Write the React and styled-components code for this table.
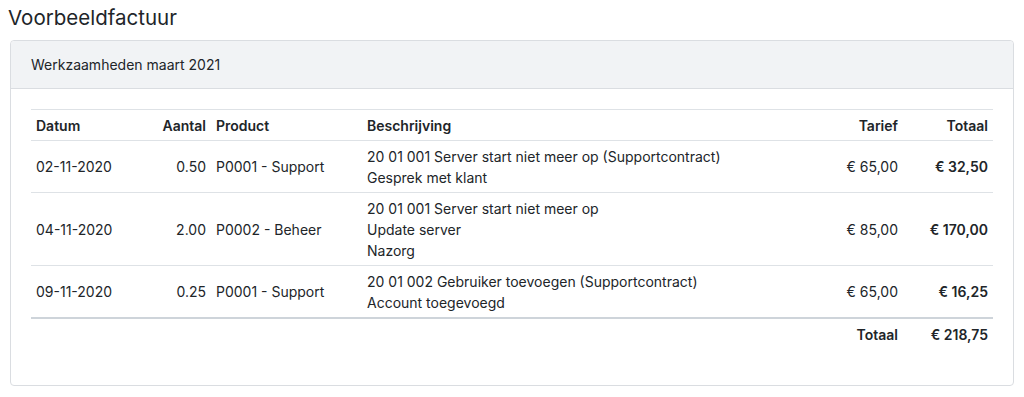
import React from 'react';
import styled, { createGlobalStyle } from 'styled-components';

const GlobalStyle = createGlobalStyle`
  body {
    margin: 0;
    background: #fff;
    font-family: Inter, "Liberation Sans", sans-serif;
    color: #212529;
  }
`;

const Page = styled.div`
  padding: 4px 10px 0 10px;
`;

const Title = styled.h1`
  margin: 0 0 8px -2px;
  font-size: 20.5px;
  font-weight: 400;
  line-height: 28px;
  color: #212529;
`;

const Card = styled.div`
  border: 1px solid #dadde1;
  border-radius: 4px;
  background: #fff;
`;

const CardHeader = styled.div`
  background: #f1f3f5;
  border-bottom: 1px solid #dadde1;
  padding: 0 20px;
  height: 47px;
  display: flex;
  align-items: center;
  font-size: 14px;
  border-radius: 4px 4px 0 0;
`;

const CardBody = styled.div`
  padding: 20px 20px 36px 20px;
`;

const Table = styled.table`
  width: 100%;
  border-collapse: collapse;
  font-size: 14px;
  line-height: 21px;
`;

const Cell = styled.td`
  padding: 4.5px 5px;
  vertical-align: middle;
  text-align: ${p => (p.$right ? 'right' : 'left')};
  font-weight: ${p => (p.$bold ? 600 : 400)};
  white-space: nowrap;
`;

const Head = styled(Cell).attrs({ as: 'th' })`
  font-weight: 600;
`;

const HeadRow = styled.tr`
  border-top: 1px solid #dee2e6;
  border-bottom: 1px solid #dee2e6;
`;

const Row = styled.tr`
  border-bottom: ${p => (p.$last ? '2px solid #ced4da' : '1px solid #dee2e6')};
`;

const Line = styled.div``;

const rows = [
  {
    datum: '02-11-2020',
    aantal: '0.50',
    product: 'P0001 - Support',
    lines: ['20 01 001 Server start niet meer op (Supportcontract)', 'Gesprek met klant'],
    tarief: '€ 65,00',
    totaal: '€ 32,50',
  },
  {
    datum: '04-11-2020',
    aantal: '2.00',
    product: 'P0002 - Beheer',
    lines: ['20 01 001 Server start niet meer op', 'Update server', 'Nazorg'],
    tarief: '€ 85,00',
    totaal: '€ 170,00',
  },
  {
    datum: '09-11-2020',
    aantal: '0.25',
    product: 'P0001 - Support',
    lines: ['20 01 002 Gebruiker toevoegen (Supportcontract)', 'Account toegevoegd'],
    tarief: '€ 65,00',
    totaal: '€ 16,25',
  },
];

export default function App() {
  return (
    <Page>
      <GlobalStyle />
      <Title>Voorbeeldfactuur</Title>
      <Card>
        <CardHeader>Werkzaamheden maart 2021</CardHeader>
        <CardBody>
          <Table>
            <colgroup>
              <col style={{ width: 100 }} />
              <col style={{ width: 80 }} />
              <col style={{ width: 151 }} />
              <col />
              <col style={{ width: 100 }} />
              <col style={{ width: 90 }} />
            </colgroup>
            <thead>
              <HeadRow>
                <Head>Datum</Head>
                <Head $right>Aantal</Head>
                <Head>Product</Head>
                <Head>Beschrijving</Head>
                <Head $right>Tarief</Head>
                <Head $right>Totaal</Head>
              </HeadRow>
            </thead>
            <tbody>
              {rows.map((r, i) => (
                <Row key={r.datum} $last={i === rows.length - 1}>
                  <Cell>{r.datum}</Cell>
                  <Cell $right>{r.aantal}</Cell>
                  <Cell>{r.product}</Cell>
                  <Cell>
                    {r.lines.map(l => (
                      <Line key={l}>{l}</Line>
                    ))}
                  </Cell>
                  <Cell $right>{r.tarief}</Cell>
                  <Cell $right $bold>{r.totaal}</Cell>
                </Row>
              ))}
              <tr>
                <Cell colSpan={4} />
                <Cell $right $bold>Totaal</Cell>
                <Cell $right $bold>€ 218,75</Cell>
              </tr>
            </tbody>
          </Table>
        </CardBody>
      </Card>
    </Page>
  );
}
